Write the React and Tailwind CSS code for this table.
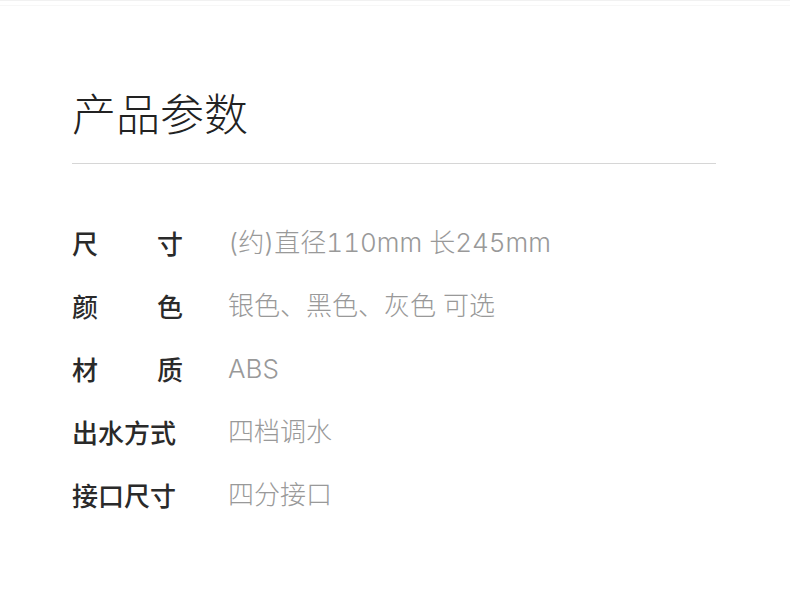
export default function App() {
  const rows = [
    { label: ["尺", "寸"], value: "(约)直径110mm 长245mm" },
    { label: ["颜", "色"], value: "银色、黑色、灰色 可选" },
    { label: ["材", "质"], value: "ABS" },
    { label: ["出水方式"], value: "四档调水" },
    { label: ["接口尺寸"], value: "四分接口" },
  ];
  return (
    <div
      className="w-[790px] h-[595px] bg-white overflow-hidden border-t border-[#f1f1f1]"
      style={{ fontFamily: '"Noto Sans CJK SC", "Noto Sans", sans-serif' }}
    >
      <div className="h-[5px] border-b border-[#f7f7f7]" />
      <div className="pl-[72px] pr-[74px] pt-[80px]">
        <h1 className="text-[44px] leading-[52px] font-light text-[#222]">产品参数</h1>
        <div className="mt-[25px] h-px bg-[#d6d6d6]" />
        <div className="mt-[47px] flex flex-col">
          {rows.map((r, i) => (
            <div key={i} className="flex items-center h-[63px]">
              <div className="w-[111px] flex justify-between text-[26px] font-medium text-[#2a2a2a]">
                {r.label.map((c, j) => (
                  <span key={j}>{c}</span>
                ))}
              </div>
              <div
                className="ml-[45px] text-[26px] font-light text-[#999] tabular-nums"
                style={{ fontFamily: 'Inter, "Noto Sans CJK SC", sans-serif' }}
              >
                {r.value}
              </div>
            </div>
          ))}
        </div>
      </div>
    </div>
  );
}
